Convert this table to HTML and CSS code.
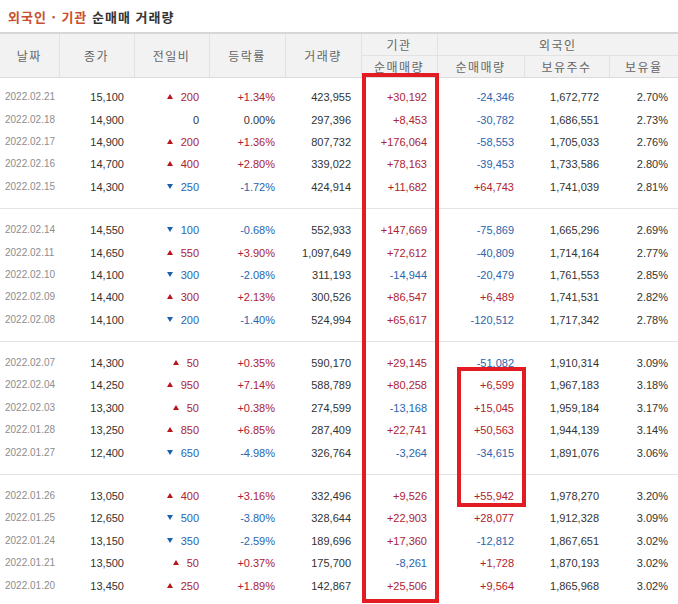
FILE: index.html
```html
<!DOCTYPE html>
<html lang="ko">
<head>
<meta charset="utf-8">
<title>외국인 · 기관 순매매 거래량</title>
<link rel="stylesheet" href="styles.css">
</head>
<body>
<div class="wrap">
  <h2 class="title"><span class="accent">외국인 · 기관</span> 순매매 거래량</h2>
  <table class="grid">
    <colgroup>
      <col style="width:59px"><col style="width:75px"><col style="width:75px"><col style="width:76px"><col style="width:76px"><col style="width:76px"><col style="width:87px"><col style="width:85px"><col style="width:69px">
    </colgroup>
    <thead>
      <tr class="h1">
        <th rowspan="2">날짜</th><th rowspan="2">종가</th><th rowspan="2">전일비</th><th rowspan="2">등락률</th><th rowspan="2">거래량</th><th>기관</th><th colspan="3">외국인</th>
      </tr>
      <tr class="h2">
        <th>순매매량</th><th>순매매량</th><th>보유주수</th><th>보유율</th>
      </tr>
    </thead>
    <tbody>
      <tr class="pad"><td colspan="9"></td></tr>
      <tr><td class="d">2022.02.21</td><td>15,100</td><td class="r"><span class="up"></span>200</td><td class="r">+1.34%</td><td>423,955</td><td class="r">+30,192</td><td class="b">-24,346</td><td>1,672,772</td><td>2.70%</td></tr>
      <tr><td class="d">2022.02.18</td><td>14,900</td><td>0</td><td>0.00%</td><td>297,396</td><td class="r">+8,453</td><td class="b">-30,782</td><td>1,686,551</td><td>2.73%</td></tr>
      <tr><td class="d">2022.02.17</td><td>14,900</td><td class="r"><span class="up"></span>200</td><td class="r">+1.36%</td><td>807,732</td><td class="r">+176,064</td><td class="b">-58,553</td><td>1,705,033</td><td>2.76%</td></tr>
      <tr><td class="d">2022.02.16</td><td>14,700</td><td class="r"><span class="up"></span>400</td><td class="r">+2.80%</td><td>339,022</td><td class="r">+78,163</td><td class="b">-39,453</td><td>1,733,586</td><td>2.80%</td></tr>
      <tr><td class="d">2022.02.15</td><td>14,300</td><td class="b"><span class="dn"></span>250</td><td class="b">-1.72%</td><td>424,914</td><td class="r">+11,682</td><td class="r">+64,743</td><td>1,741,039</td><td>2.81%</td></tr>
      <tr class="sep"><td colspan="9"></td></tr>
      <tr><td class="d">2022.02.14</td><td>14,550</td><td class="b"><span class="dn"></span>100</td><td class="b">-0.68%</td><td>552,933</td><td class="r">+147,669</td><td class="b">-75,869</td><td>1,665,296</td><td>2.69%</td></tr>
      <tr><td class="d">2022.02.11</td><td>14,650</td><td class="r"><span class="up"></span>550</td><td class="r">+3.90%</td><td>1,097,649</td><td class="r">+72,612</td><td class="b">-40,809</td><td>1,714,164</td><td>2.77%</td></tr>
      <tr><td class="d">2022.02.10</td><td>14,100</td><td class="b"><span class="dn"></span>300</td><td class="b">-2.08%</td><td>311,193</td><td class="b">-14,944</td><td class="b">-20,479</td><td>1,761,553</td><td>2.85%</td></tr>
      <tr><td class="d">2022.02.09</td><td>14,400</td><td class="r"><span class="up"></span>300</td><td class="r">+2.13%</td><td>300,526</td><td class="r">+86,547</td><td class="r">+6,489</td><td>1,741,531</td><td>2.82%</td></tr>
      <tr><td class="d">2022.02.08</td><td>14,100</td><td class="b"><span class="dn"></span>200</td><td class="b">-1.40%</td><td>524,994</td><td class="r">+65,617</td><td class="b">-120,512</td><td>1,717,342</td><td>2.78%</td></tr>
      <tr class="sep"><td colspan="9"></td></tr>
      <tr><td class="d">2022.02.07</td><td>14,300</td><td class="r"><span class="up"></span>50</td><td class="r">+0.35%</td><td>590,170</td><td class="r">+29,145</td><td class="b">-51,082</td><td>1,910,314</td><td>3.09%</td></tr>
      <tr><td class="d">2022.02.04</td><td>14,250</td><td class="r"><span class="up"></span>950</td><td class="r">+7.14%</td><td>588,789</td><td class="r">+80,258</td><td class="r">+6,599</td><td>1,967,183</td><td>3.18%</td></tr>
      <tr><td class="d">2022.02.03</td><td>13,300</td><td class="r"><span class="up"></span>50</td><td class="r">+0.38%</td><td>274,599</td><td class="b">-13,168</td><td class="r">+15,045</td><td>1,959,184</td><td>3.17%</td></tr>
      <tr><td class="d">2022.01.28</td><td>13,250</td><td class="r"><span class="up"></span>850</td><td class="r">+6.85%</td><td>287,409</td><td class="r">+22,741</td><td class="r">+50,563</td><td>1,944,139</td><td>3.14%</td></tr>
      <tr><td class="d">2022.01.27</td><td>12,400</td><td class="b"><span class="dn"></span>650</td><td class="b">-4.98%</td><td>326,764</td><td class="b">-3,264</td><td class="b">-34,615</td><td>1,891,076</td><td>3.06%</td></tr>
      <tr class="sep"><td colspan="9"></td></tr>
      <tr><td class="d">2022.01.26</td><td>13,050</td><td class="r"><span class="up"></span>400</td><td class="r">+3.16%</td><td>332,496</td><td class="r">+9,526</td><td class="r">+55,942</td><td>1,978,270</td><td>3.20%</td></tr>
      <tr><td class="d">2022.01.25</td><td>12,650</td><td class="b"><span class="dn"></span>500</td><td class="b">-3.80%</td><td>328,644</td><td class="r">+22,903</td><td class="r">+28,077</td><td>1,912,328</td><td>3.09%</td></tr>
      <tr><td class="d">2022.01.24</td><td>13,150</td><td class="b"><span class="dn"></span>350</td><td class="b">-2.59%</td><td>189,696</td><td class="r">+17,360</td><td class="b">-12,812</td><td>1,867,651</td><td>3.02%</td></tr>
      <tr><td class="d">2022.01.21</td><td>13,500</td><td class="r"><span class="up"></span>50</td><td class="r">+0.37%</td><td>175,700</td><td class="b">-8,261</td><td class="r">+1,728</td><td>1,870,193</td><td>3.02%</td></tr>
      <tr><td class="d">2022.01.20</td><td>13,450</td><td class="r"><span class="up"></span>250</td><td class="r">+1.89%</td><td>142,867</td><td class="r">+25,506</td><td class="r">+9,564</td><td>1,865,968</td><td>3.02%</td></tr>
    </tbody>
  </table>
  <div class="mark mark-inst"></div>
  <div class="mark mark-frgn"></div>
</div>
</body>
</html>
```
FILE: styles.css
```css
* { box-sizing: border-box; }
html, body { margin: 0; padding: 0; background: #fff; }
body { font-family: "Liberation Sans", Arial, "Noto Sans CJK KR", sans-serif; color: #333; }
.wrap { position: relative; width: 678px; height: 604px; overflow: hidden; }
.title {
  margin: 0; height: 32px; padding: 9px 0 0 8px;
  font-family: "Noto Sans CJK KR", sans-serif; font-size: 13px; font-weight: 700;
  line-height: 16px; color: #333; letter-spacing: 1px;
}
.title .accent { color: #c9502e; }
.grid { border-collapse: collapse; table-layout: fixed; width: 678px; border-top: 2px solid #d6d6d6; }
.grid th {
  background: #f2f2f2; color: #666; font-weight: 400;
  font-family: "Noto Sans CJK KR", sans-serif; font-size: 12px; letter-spacing: 1.5px;
  height: 22px; padding: 0; text-align: center;
  border-left: 1px solid #e2e2e2; border-bottom: 1px solid #e2e2e2;
}
.grid thead tr th:first-child { border-left: 0; }
.grid .h1 th { height: 22px; }
.grid .h2 th { height: 22px; border-bottom: 1px solid #dcdcdc; }
.grid .h1 th[rowspan] { border-bottom: 1px solid #dcdcdc; }
.grid .h2 th:first-child { border-left: 1px solid #e2e2e2; }
.grid td {
  height: 22.4px; padding: 0 10px 0 0; text-align: right;
  font-size: 11px; color: #333; white-space: nowrap; line-height: 14px;
}
.grid td.d { text-align: left; padding: 0 0 0 5px; color: #8d8d8d; font-size: 10px; }
.grid td.r { color: #ad2230; }
.grid td.b { color: #2a65ad; }
.grid tr.pad td { height: 9px; }
.grid tr.sep td { height: 21px; padding: 0; background: linear-gradient(#e3e3e3, #e3e3e3) 0 10px / 100% 1px no-repeat; }
.up, .dn {
  display: inline-block; width: 0; height: 0; margin-right: 8px; vertical-align: 2px;
  border-left: 3.5px solid transparent; border-right: 3.5px solid transparent;
}
.up { border-bottom: 5px solid #b8141c; }
.dn { border-top: 5px solid #1f5fb0; }
.mark { position: absolute; border: 4px solid #e31b23; }
.mark-inst { left: 362px; top: 73px; width: 77px; height: 530px; }
.mark-frgn { left: 457px; top: 367px; width: 69px; height: 140px; }
```
